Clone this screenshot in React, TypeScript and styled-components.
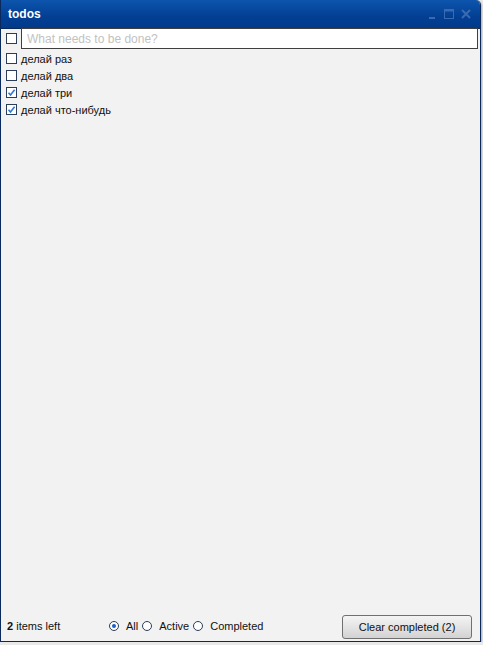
import React, { useState } from 'react';
import styled, { createGlobalStyle } from 'styled-components';

const GlobalStyle = createGlobalStyle`
  html, body {
    margin: 0;
    padding: 0;
    background: #e9e9e9;
    font-family: 'Liberation Sans', Arial, sans-serif;
  }
`;

const Window = styled.div`
  width: 481px;
  height: 642px;
  display: flex;
  flex-direction: column;
  box-sizing: border-box;
  border: 1px solid #0a2a5e;
  border-top: none;
  border-radius: 0 5px 0 0;
  background: #f2f2f2;
  overflow: hidden;
  box-shadow: 1px 1px 2px rgba(0, 0, 0, 0.25);
`;

const TitleBar = styled.div`
  height: 29px;
  flex: none;
  display: flex;
  align-items: center;
  padding: 0 9px 0 7px;
  background: linear-gradient(#0d55ad, #023f93 60%, #013a8a);
  border-bottom: 1px solid #0a2a5e;
  box-sizing: border-box;
`;

const Title = styled.div`
  flex: 1;
  color: #ffffff;
  font-weight: bold;
  font-size: 12px;
  margin-top: -1px;
`;

const Controls = styled.div`
  display: flex;
  align-items: center;
  gap: 7px;
`;

const Body = styled.div`
  flex: 1;
  display: flex;
  flex-direction: column;
  padding: 0 2px 0 5px;
`;

const NewRow = styled.div`
  display: flex;
  align-items: center;
  gap: 4px;
  height: 21px;
  margin-top: -1px;
`;

const Input = styled.input`
  flex: 1;
  height: 21px;
  box-sizing: border-box;
  border: 1px solid #3f3f3f;
  background: #ffffff;
  font-family: inherit;
  font-size: 12px;
  padding: 0 5px;
  outline: none;
  &::placeholder {
    color: #c2c2c2;
  }
`;

const List = styled.div`
  display: flex;
  flex-direction: column;
  margin-top: 1px;
`;

const Item = styled.label`
  display: flex;
  align-items: center;
  gap: 4px;
  height: 17px;
  font-size: 11px;
  color: #111111;
`;

const Box = styled.span`
  width: 11px;
  height: 11px;
  flex: none;
  box-sizing: border-box;
  border: 1px solid #2b3d57;
  background: #ffffff;
  display: flex;
  align-items: center;
  justify-content: center;
`;

const Footer = styled.div`
  height: 30px;
  flex: none;
  display: flex;
  align-items: center;
  padding: 0 8px 0 6px;
  font-size: 11px;
  color: #111111;
`;

const Left = styled.div`
  width: 102px;
`;

const Filters = styled.div`
  flex: 1;
  display: flex;
  align-items: center;
`;

const Filter = styled.label`
  display: flex;
  align-items: center;
  gap: 7px;
  margin-right: 4px;
`;

const Radio = styled.span<{ $on: boolean }>`
  width: 10px;
  height: 10px;
  box-sizing: border-box;
  border-radius: 50%;
  border: 1px solid #2b3d57;
  background: #ffffff;
  display: flex;
  align-items: center;
  justify-content: center;
  &::after {
    content: '';
    width: 4px;
    height: 4px;
    border-radius: 50%;
    background: ${p => (p.$on ? '#1a5fc4' : 'transparent')};
  }
`;

const Button = styled.button`
  width: 130px;
  height: 24px;
  border: 1px solid #707070;
  border-radius: 3px;
  background: linear-gradient(#f4f4f4, #e4e4e4 50%, #d2d2d2);
  font-family: inherit;
  font-size: 11px;
  color: #111111;
  padding: 0;
  margin-top: 1px;
`;

const Check = () => (
  <svg width="9" height="9" viewBox="0 0 9 9">
    <path d="M1.5 4.8 L3.5 7 L7.6 1.8" fill="none" stroke="#2f78d8" strokeWidth="1.6" />
  </svg>
);

const todos = [
  { text: 'делай раз', done: false },
  { text: 'делай два', done: false },
  { text: 'делай три', done: true },
  { text: 'делай что-нибудь', done: true },
];

const App: React.FC = () => {
  const [filter] = useState('All');
  const left = todos.filter(t => !t.done).length;
  const done = todos.length - left;

  return (
    <>
      <GlobalStyle />
      <Window>
        <TitleBar>
          <Title>todos</Title>
          <Controls>
            <svg width="9" height="10" viewBox="0 0 9 10">
              <rect x="1" y="8" width="6" height="2" fill="#3a6ab2" />
            </svg>
            <svg width="10" height="10" viewBox="0 0 10 10">
              <rect x="0.5" y="0.5" width="9" height="9" fill="none" stroke="#3a6ab2" />
              <rect x="0.5" y="0.5" width="9" height="2" fill="#3a6ab2" />
            </svg>
            <svg width="10" height="10" viewBox="0 0 10 10">
              <path d="M1 1 L9 9 M9 1 L1 9" stroke="#3a6ab2" strokeWidth="2" />
            </svg>
          </Controls>
        </TitleBar>
        <Body>
          <NewRow>
            <Box />
            <Input placeholder="What needs to be done?" />
          </NewRow>
          <List>
            {todos.map(t => (
              <Item key={t.text}>
                <Box>{t.done && <Check />}</Box>
                {t.text}
              </Item>
            ))}
          </List>
        </Body>
        <Footer>
          <Left>
            <b>{left}</b> items left
          </Left>
          <Filters>
            {['All', 'Active', 'Completed'].map(f => (
              <Filter key={f}>
                <Radio $on={f === filter} />
                {f}
              </Filter>
            ))}
          </Filters>
          <Button>Clear completed ({done})</Button>
        </Footer>
      </Window>
    </>
  );
};

export default App;
